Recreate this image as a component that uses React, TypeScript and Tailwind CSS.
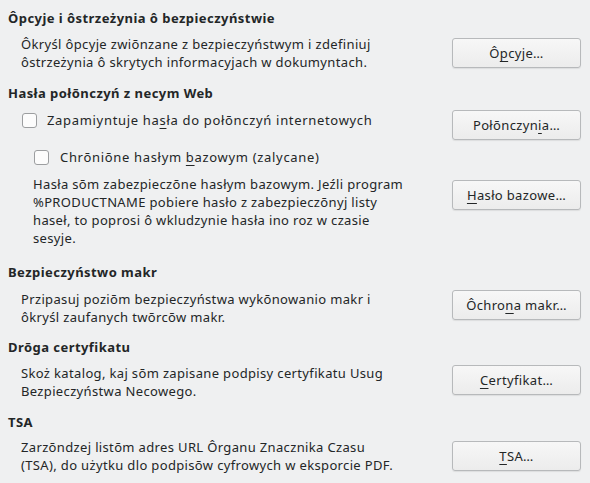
import type { ReactNode } from 'react';

function Btn({ children, className = '' }: { children: ReactNode; className?: string }) {
  return (
    <div
      className={`flex h-[30px] w-[129px] shrink-0 items-center justify-center rounded-[3px] border border-[#b7b9bb] bg-gradient-to-b from-[#f7f7f7] to-[#ececec] shadow-[0_1px_1px_rgba(0,0,0,0.08)] ${className}`}
    >
      <span>{children}</span>
    </div>
  );
}

function Mn({ children }: { children: ReactNode }) {
  return <span className="underline decoration-1 underline-offset-[3px]">{children}</span>;
}

function Check() {
  return <div className="h-[15px] w-[15px] shrink-0 rounded-[3px] border border-[#9c9ea0] bg-[#fcfcfc]" />;
}

export default function App() {
  return (
    <div className="h-[483px] w-[590px] overflow-hidden bg-[#eff0f1] pl-[8px] pr-[9px] pt-[9px] font-['Noto_Sans',sans-serif] text-[13px] leading-[18px] tracking-[0.35px] text-[#232627]">
      {/* Opcje */}
      <div className="font-bold tracking-[0.45px]">Ôpcyje i ôstrzeżynia ô bezpieczyństwie</div>
      <div className="mt-[8px] flex items-center justify-between">
        <div className="pl-[13px]">
          Ôkryśl ôpcyje zwiōnzane z bezpieczyństwym i zdefiniuj
          <br />
          ôstrzeżynia ô skrytych informacyjach w dokumyntach.
        </div>
        <Btn>
          Ô<Mn>p</Mn>cyje…
        </Btn>
      </div>

      {/* Hasła */}
      <div className="mt-[13px] font-bold tracking-[0.45px]">Hasła połōnczyń z necym Web</div>
      <div className="mt-[8px] flex items-start justify-between">
        <div className="mt-px flex items-center gap-[10px] pl-[14px]">
          <Check />
          <span className="tracking-[0.68px]">
            Zapamiyntuje ha<Mn>s</Mn>ła do połōnczyń internetowych
          </span>
        </div>
        <Btn>
          Połōnczyn<Mn>i</Mn>a…
        </Btn>
      </div>
      <div className="mt-[8px] flex items-center gap-[11px] pl-[26px]">
        <Check />
        <span className="tracking-[0.68px]">
          Chrōniōne hasłym <Mn>b</Mn>azowym (zalycane)
        </span>
      </div>
      <div className="mt-[9px] flex items-start justify-between">
        <div className="pl-[25px]">
          Hasła sōm zabezpieczōne hasłym bazowym. Jeźli program
          <br />
          %PRODUCTNAME pobiere hasło z zabezpieczōnyj listy
          <br />
          haseł, to poprosi ô wkludzynie hasła ino roz w czasie
          <br />
          sesyje.
        </div>
        <Btn className="mt-[5px]">
          <Mn>H</Mn>asło bazowe…
        </Btn>
      </div>

      {/* Makra */}
      <div className="mt-[16px] font-bold tracking-[0.45px]">Bezpieczyństwo makr</div>
      <div className="mt-[9px] flex items-start justify-between">
        <div className="pl-[13px]">
          Przipasuj poziōm bezpieczyństwa wykōnowanio makr i
          <br />
          ôkryśl zaufanych twōrcōw makr.
        </div>
        <Btn>
          Ôchro<Mn>n</Mn>a makr…
        </Btn>
      </div>

      {/* Certyfikat */}
      <div className="mt-[12px] font-bold tracking-[0.45px]">Drōga certyfikatu</div>
      <div className="mt-[8px] flex items-start justify-between">
        <div className="pl-[13px]">
          Skoż katalog, kaj sōm zapisane podpisy certyfikatu Usug
          <br />
          Bezpieczyństwa Necowego.
        </div>
        <Btn className="mt-px">
          <Mn>C</Mn>ertyfikat…
        </Btn>
      </div>

      {/* TSA */}
      <div className="mt-[13px] font-bold tracking-[0.45px]">TSA</div>
      <div className="mt-[7px] flex items-start justify-between">
        <div className="pl-[13px]">
          Zarzōndzej listōm adres URL Ôrganu Znacznika Czasu
          <br />
          (TSA), do użytku dlo podpisōw cyfrowych w eksporcie PDF.
        </div>
        <Btn className="mt-[3px]">
          <Mn>T</Mn>SA…
        </Btn>
      </div>
    </div>
  );
}
